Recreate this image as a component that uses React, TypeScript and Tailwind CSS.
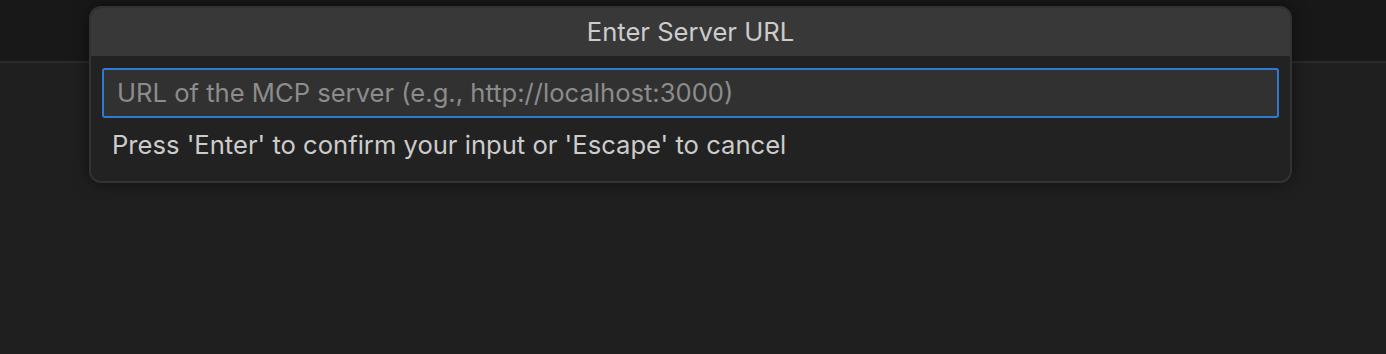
export default function App() {
  return (
    <div
      className="relative h-[354px] w-full overflow-hidden bg-[#1f1f1f]"
      style={{ fontFamily: 'Inter, "Noto Sans", sans-serif' }}
    >
      {/* title bar strip */}
      <div className="h-[63px] border-b-2 border-[#2b2b2b] bg-[#181818]" />

      {/* quick input dialog */}
      <div className="absolute left-[89px] top-[6px] w-[1203px] overflow-hidden rounded-[12px] border-2 border-[#323232] bg-[#222222] shadow-[0_0_16px_rgba(0,0,0,0.5)]">
        <div className="flex h-[48px] items-center justify-center bg-[#383838] text-[25.6px] leading-[30px] text-[#cccccc]">
          Enter Server URL
        </div>
        <div className="px-[11px] pt-[12px] pb-[21px]">
          <div className="flex h-[50px] items-center rounded-[3px] border-2 border-[#2f7bd4] bg-[#313131] px-[13px] text-[25.6px] leading-[30px] text-[#8c8c8c]">
            URL of the MCP server (e.g., http://localhost:3000)
          </div>
          <div className="mt-[12px] px-[10px] text-[25.6px] leading-[30px] text-[#cccccc]">
            Press 'Enter' to confirm your input or 'Escape' to cancel
          </div>
        </div>
      </div>
    </div>
  );
}
